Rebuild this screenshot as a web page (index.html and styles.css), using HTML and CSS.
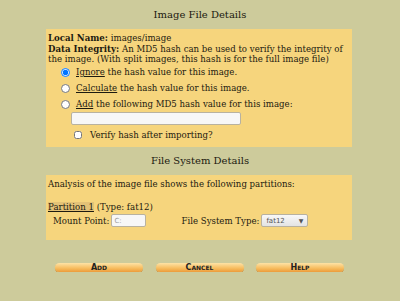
FILE: index.html
```html
<!DOCTYPE html>
<html lang="en">

<head>
    <meta charset="utf-8">
    <title>Image File Details</title>
    <link rel="stylesheet" href="styles.css">
</head>

<body>
    <h2 class="titel">Image File Details</h2>
    <section class="boks">
        <p><b>Local Name:</b> images/image</p>
        <p><b>Data Integrity:</b> An MD5 hash can be used to verify the integrity of the image. (With split images, this hash is for the full image file)</p>
        <label class="valg forste"><input type="radio" name="md5" checked> <span><u>Ignore</u> the hash value for this image.</span></label>
        <label class="valg"><input type="radio" name="md5"> <span><u>Calculate</u> the hash value for this image.</span></label>
        <label class="valg"><input type="radio" name="md5"> <span><u>Add</u> the following MD5 hash value for this image:</span></label>
        <input type="text" class="hash">
        <label class="tjek"><input type="checkbox"> <span>Verify hash after importing?</span></label>
    </section>

    <h2 class="titel anden">File System Details</h2>
    <section class="boks nederst">
        <p>Analysis of the image file shows the following partitions:</p>
        <p class="partition"><span class="plink">Partition 1</span> (Type: fat12)</p>
        <div class="felter">
            <label class="mountfelt">Mount Point: <input type="text" class="mount" value="C:"></label>
            <label>File System Type: <span class="vaelg">fat12 <i>&#9660;</i></span></label>
        </div>
    </section>

    <nav class="knapper">
        <button>Add</button>
        <button>Cancel</button>
        <button>Help</button>
    </nav>
</body>

</html>
```

FILE: styles.css
```css
body {
    margin: 0;
    background: #cdcb9b;
    font-family: 'DejaVu Serif', serif;
    font-size: 8.6px;
    color: #1c1a10;
}

.titel {
    font-weight: normal;
    font-size: 10px;
    text-align: center;
    margin: 9px 0 9px 0;
}

.anden {
    margin-top: 8px;
}

.boks {
    background: #f6d57d;
    margin: 0 48px 0 46px;
    padding: 4px 0 7px 2px;
}

.boks p {
    margin: 0 0 1px 0;
    line-height: 10px;
}

.valg {
    display: flex;
    align-items: center;
    margin: 4px 0 0 12px;
    height: 12px;
}

.forste {
    margin-top: 2px;
}

.valg input {
    margin: 0 6px 0 1px;
    width: 9px;
    height: 9px;
}

.hash {
    display: block;
    width: 170px;
    height: 13px;
    margin: 2px 0 0 23px;
    border: 1px solid #b8b2a0;
    border-radius: 2px;
    background: #f7f7f7;
    padding: 0;
    box-sizing: border-box;
}

.tjek {
    display: flex;
    align-items: center;
    margin: 5px 0 0 25px;
}

.tjek input {
    margin: 0 8px 0 1px;
    width: 8px;
    height: 8px;
}

.nederst {
    padding-bottom: 13px;
}

.partition {
    margin-top: 13px !important;
}

.plink {
    text-decoration: underline;
    background: #e3c277;
}

.felter {
    display: flex;
    margin: 2px 0 0 5px;
}

.felter label {
    display: flex;
    align-items: center;
    gap: 2px;
}

.mountfelt {
    margin-right: 35px;
}

.mount {
    width: 35px;
    height: 13px;
    padding: 0 2px;
    box-sizing: border-box;
    border: 1px solid #b8b2a0;
    border-radius: 2px;
    background: #f7f7f7;
    font-family: 'DejaVu Sans', sans-serif;
    font-size: 7px;
    color: #999;
}

.vaelg {
    display: flex;
    justify-content: space-between;
    align-items: center;
    box-sizing: border-box;
    width: 47px;
    height: 13px;
    padding: 0 4px;
    border: 1px solid #b8b2a0;
    border-radius: 2px;
    background: linear-gradient(#f8f8f8, #e4e4e4);
    font-family: 'DejaVu Sans', sans-serif;
    font-size: 7px;
    color: #555;
}

.vaelg i {
    font-style: normal;
    font-size: 6px;
}

.knapper {
    display: flex;
    justify-content: space-between;
    margin: 23px 56px 0 55px;
}

button {
    width: 88px;
    height: 9px;
    padding: 0;
    border: none;
    border-radius: 5px;
    background: linear-gradient(#fde3a6, #f7bb5d 60%, #ec9c3a);
    box-shadow: 0 1px 0 #d2913c;
    font-family: 'DejaVu Sans', sans-serif;
    font-weight: bold;
    font-size: 8px;
    font-variant: small-caps;
    color: #222;
    line-height: 9px;
}
```
